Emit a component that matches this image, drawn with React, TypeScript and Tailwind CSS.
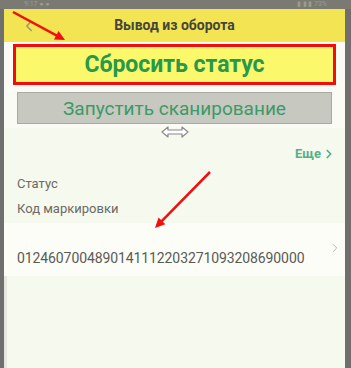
import { ChevronLeft, ChevronRight } from "lucide-react";

const font = { fontFamily: "Roboto, 'Noto Sans', sans-serif" };

function Arrow({ x1, y1, x2, y2 }: { x1: number; y1: number; x2: number; y2: number }) {
  const a = Math.atan2(y2 - y1, x2 - x1);
  const l = 11;
  const w = 0.45;
  const p1 = `${x2 - l * Math.cos(a - w)},${y2 - l * Math.sin(a - w)}`;
  const p2 = `${x2 - l * Math.cos(a + w)},${y2 - l * Math.sin(a + w)}`;
  return (
    <g>
      <line x1={x1} y1={y1} x2={x2 - 4 * Math.cos(a)} y2={y2 - 4 * Math.sin(a)} stroke="#f01010" strokeWidth="2.5" />
      <polygon points={`${x2},${y2} ${p1} ${p2}`} fill="#f01010" />
    </g>
  );
}

export default function App() {
  return (
    <div className="relative w-[351px] h-[368px] overflow-hidden bg-[#6f6f6f] flex flex-col" style={font}>
      <div className="h-[9px] bg-[#7a7a72] flex items-center justify-between px-6 text-[7px] text-[#9a9a90]">
        <span>9:17 ● ●</span>
        <span>▮ ▮ ▮ 73%</span>
      </div>
      <div className="flex-1 flex pl-[4px] pr-[6px]">
        <div className="flex-1 flex flex-col bg-[#f6f9ed]">
          <header className="relative h-[33px] bg-[#f2e452] flex items-center justify-center">
            <ChevronLeft className="absolute left-[16px] w-[18px] h-[18px] text-[#9a9a70]" strokeWidth={2} />
            <span className="text-[14px] font-bold text-[#45453a]">Вывод из оборота</span>
          </header>
          <div className="bg-[#fafbf4] pt-[2px] pb-[4px] px-[9px] flex flex-col">
            <button className="h-[41px] border-[3px] border-[#f20c0c] bg-[#fbf86c] flex items-center justify-center">
              <span className="text-[23px] font-bold text-[#27994b] leading-none">Сбросить статус</span>
            </button>
            <button className="mt-[7px] mx-[4px] h-[32px] bg-[#c7c8c0] border border-[#a8a9a2] flex items-center justify-center">
              <span className="text-[19px] text-[#3c9a68] leading-none">Запустить сканирование</span>
            </button>
          </div>
          <div className="flex justify-center -mt-[2px] h-[12px]">
            <svg width="28" height="12" viewBox="0 0 28 12">
              <path d="M1 6 L7 1 L7 4 L21 4 L21 1 L27 6 L21 11 L21 8 L7 8 L7 11 Z" fill="#ffffff" stroke="#8a8a8a" strokeWidth="1.2" strokeLinejoin="round" />
            </svg>
          </div>
          <div className="flex justify-end pr-[9px] mt-[6px]">
            <span className="text-[13px] font-bold text-[#55b088] flex items-center">
              Еще
              <ChevronRight className="w-[14px] h-[14px] ml-[1px]" strokeWidth={3} />
            </span>
          </div>
          <div className="pl-[13px] mt-[10px] text-[13px] text-[#6a6a66]">Статус</div>
          <div className="pl-[13px] mt-[6px] text-[13px] text-[#6a6a66]">Код маркировки</div>
          <div className="mt-[4px] h-[53px] bg-[#fcfdf7] flex items-center justify-between pl-[13px] pr-[3px]">
            <span className="text-[14px] text-[#5a5a58] mt-[18px] tracking-[-0.1px]">0124607004890141112203271093208690000</span>
            <ChevronRight className="w-[14px] h-[14px] text-[#aaaaaa] -mt-[2px]" strokeWidth={1.5} />
          </div>
          <div className="flex-1 border-l-[3px] border-[#e6e8df] bg-[#f6f9ed]" />
        </div>
      </div>
      <svg className="absolute inset-0 pointer-events-none" width="351" height="368">
        <Arrow x1={13} y1={12} x2={65} y2={40} />
        <Arrow x1={210} y1={172} x2={155} y2={228} />
      </svg>
    </div>
  );
}
